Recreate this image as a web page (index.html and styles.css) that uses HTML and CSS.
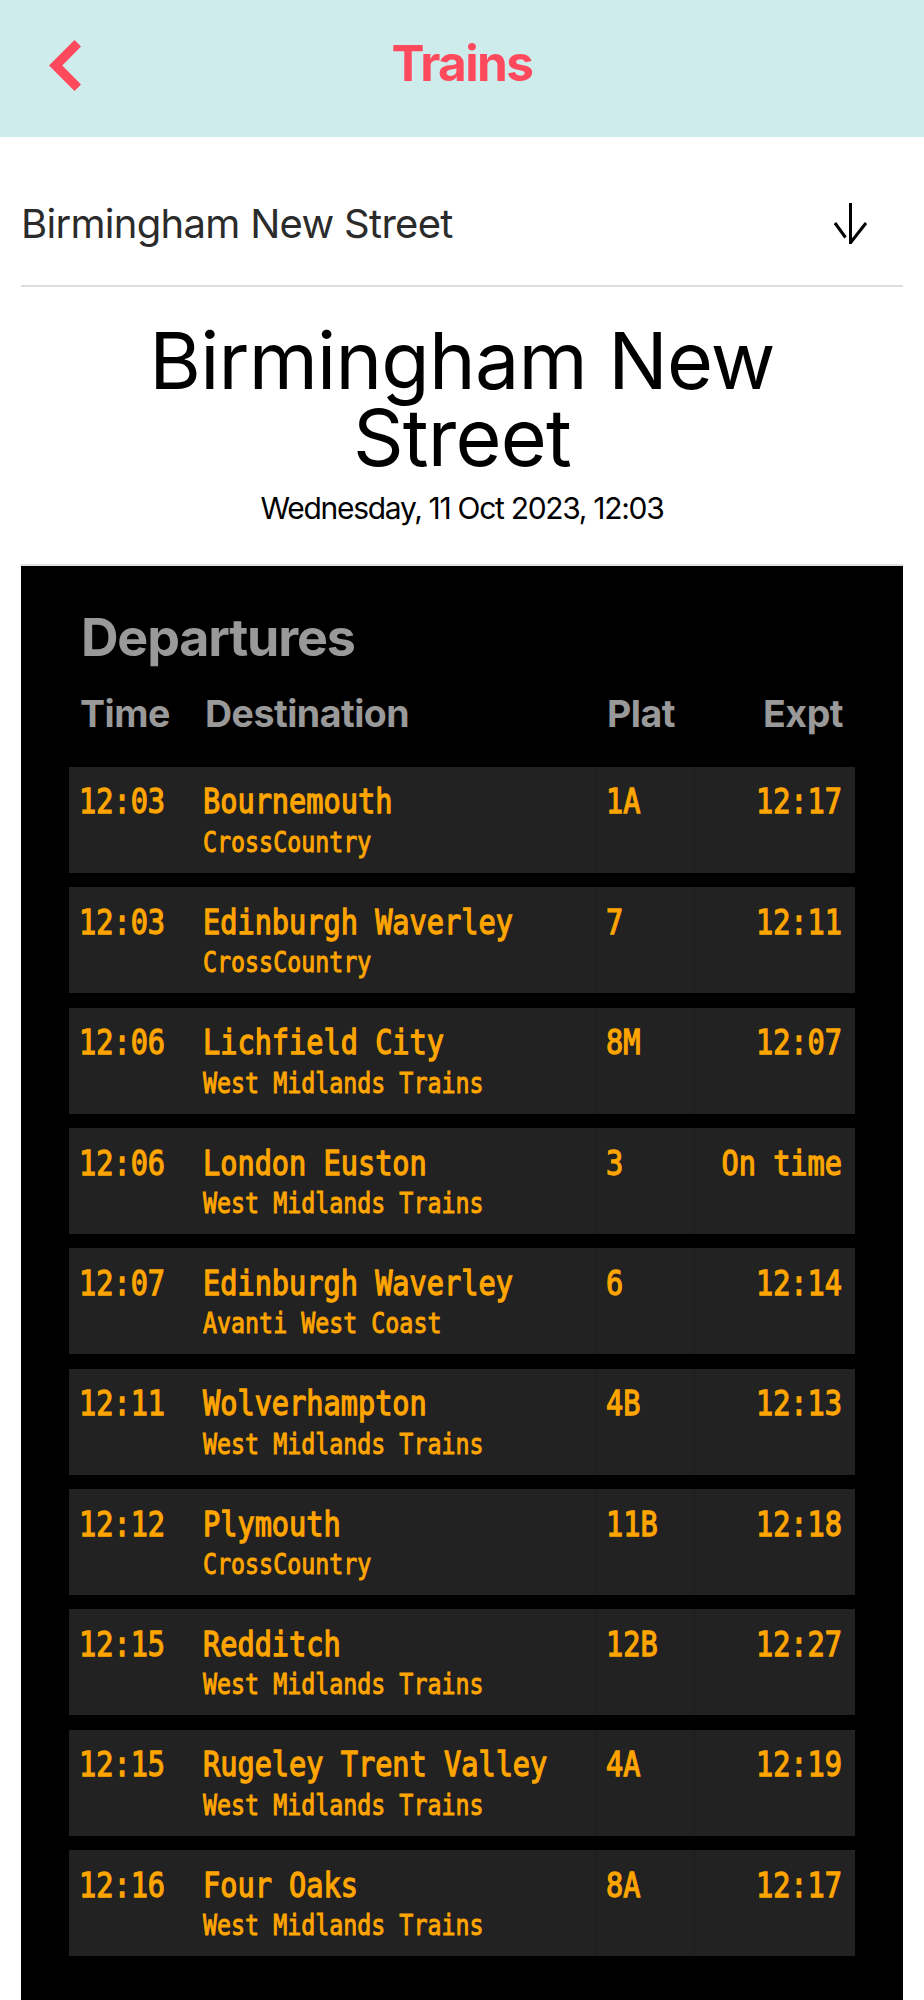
FILE: index.html
```html
<!DOCTYPE html>
<html lang="en">

<head>
    <meta charset="UTF-8">
    <meta name="viewport" content="width=device-width, initial-scale=1.0">
    <title>Trains</title>
    <link rel="stylesheet" href="styles.css">
</head>

<body>
    <header class="header">
        <svg class="back" width="32" height="51" viewBox="0 0 32 51">
            <path d="M0 25.5 L25.5 0 L32 6.5 L13.3 25.5 L32 44.5 L25.5 51 Z" fill="#ff495c"/>
        </svg>
        <h1 class="title">Trains</h1>
    </header>

    <main class="content">
        <div class="select">
            <span>Birmingham New Street</span>
            <svg class="arrow" width="34" height="44" viewBox="0 0 34 44" fill="none" stroke="#000" stroke-width="3">
                <path d="M16.5 0 V41"/>
                <path d="M32 20 L16.3 40"/>
                <path d="M1 20 L11.5 34.5"/>
            </svg>
        </div>

        <h2 class="station">Birmingham New<br>Street</h2>
        <p class="date">Wednesday, 11 Oct 2023, 12:03</p>

        <div class="board">
            <h3 class="board_title">Departures</h3>
            <div class="labels">
                <span>Time</span>
                <span>Destination</span>
                <span>Plat</span>
                <span>Expt</span>
            </div>
            <div class="rows" id="rows"></div>
        </div>
    </main>

    <script>
        const trains = [
            ['12:03', 'Bournemouth', 'CrossCountry', '1A', '12:17'],
            ['12:03', 'Edinburgh Waverley', 'CrossCountry', '7', '12:11'],
            ['12:06', 'Lichfield City', 'West Midlands Trains', '8M', '12:07'],
            ['12:06', 'London Euston', 'West Midlands Trains', '3', 'On time'],
            ['12:07', 'Edinburgh Waverley', 'Avanti West Coast', '6', '12:14'],
            ['12:11', 'Wolverhampton', 'West Midlands Trains', '4B', '12:13'],
            ['12:12', 'Plymouth', 'CrossCountry', '11B', '12:18'],
            ['12:15', 'Redditch', 'West Midlands Trains', '12B', '12:27'],
            ['12:15', 'Rugeley Trent Valley', 'West Midlands Trains', '4A', '12:19'],
            ['12:16', 'Four Oaks', 'West Midlands Trains', '8A', '12:17']
        ];

        let html = '';
        for (let t of trains) {
            html += `<div class="row">
                <div class="cell"><p class="led">${t[0]}</p></div>
                <div class="cell"><p class="led">${t[1]}</p><p class="led operator">${t[2]}</p></div>
                <div class="cell"><p class="led">${t[3]}</p></div>
                <div class="cell"><p class="led">${t[4]}</p></div>
            </div>`;
        }
        document.getElementById('rows').innerHTML = html;
    </script>
</body>

</html>
```
FILE: styles.css
```css
* {
    box-sizing: border-box;
}

body {
    margin: 0;
    height: 2000px;
    display: flex;
    flex-direction: column;
    overflow: hidden;
    font-family: Inter, "Liberation Sans", sans-serif;
    background-color: white;
    color: black;
}

h1, h2, h3, p {
    margin: 0;
}

.header {
    display: grid;
    grid-template-columns: 32px 1fr 32px;
    padding: 0 49px;
    height: 137px;
    background-color: #ceeceb;
}

.back {
    margin-top: 40px;
}

.title {
    text-align: center;
    font-size: 49.5px;
    line-height: 127px;
    letter-spacing: -1.6px;
    color: #ff495c;
}

.content {
    flex: 1;
    display: flex;
    flex-direction: column;
    padding: 0 21px;
}

.select {
    display: flex;
    justify-content: space-between;
    height: 150px;
    padding: 25px 35px 0 0;
    border-bottom: 2px solid #dddddd;
    font-size: 40px;
    line-height: 124px;
    letter-spacing: -0.7px;
    color: #2b2b2b;
}

.arrow {
    margin-top: 41px;
}

.station {
    margin-top: 35px;
    text-align: center;
    font-size: 79px;
    font-weight: 400;
    line-height: 76.5px;
    letter-spacing: -0.8px;
}

.date {
    margin-top: 13px;
    text-align: center;
    font-size: 30px;
    line-height: 40px;
    letter-spacing: -1.3px;
}

.board {
    flex: 1;
    margin-top: 36px;
    padding: 42px 48px 0 48px;
    border-top: 2px solid #e2e2e2;
    background-color: black;
    background-clip: padding-box;
}

.board_title {
    padding-left: 12px;
    font-size: 52px;
    line-height: 60px;
    letter-spacing: -1.2px;
    color: #999999;
}

.labels,
.row {
    display: grid;
    grid-template-columns: 124px 402px 99px 1fr;
}

.labels {
    margin-top: 24px;
    font-size: 37.5px;
    font-weight: 700;
    line-height: 44px;
    letter-spacing: -0.5px;
    color: #999999;
}

.labels span {
    padding: 0 12px;
}

.labels span:first-child {
    padding-left: 11px;
}

.labels span:last-child {
    text-align: right;
}

.rows {
    display: grid;
    gap: 14.35px;
    margin-top: 30.9px;
}

.row {
    height: 106px;
    background-color: #222222;
}

.cell {
    padding: 18.6px 12px 0 10px;
}

.cell:nth-child(n+3) {
    border-left: 1px solid #1c1c1c;
}

.cell:last-child {
    padding-right: 13px;
    text-align: right;
}

/* tall, narrow dot-matrix style lettering */
.led {
    font-family: "DejaVu Sans Mono", monospace;
    font-size: 28.6px;
    line-height: 36px;
    white-space: nowrap;
    color: #ffa500;
    -webkit-text-stroke: 1.1px #ffa500;
    transform: scaleY(1.2);
    transform-origin: 0 28px;
}

.operator {
    margin-top: 7.4px;
    font-size: 23.3px;
    line-height: 30px;
    -webkit-text-stroke-width: 0.8px;
    transform-origin: 0 23px;
}
```
